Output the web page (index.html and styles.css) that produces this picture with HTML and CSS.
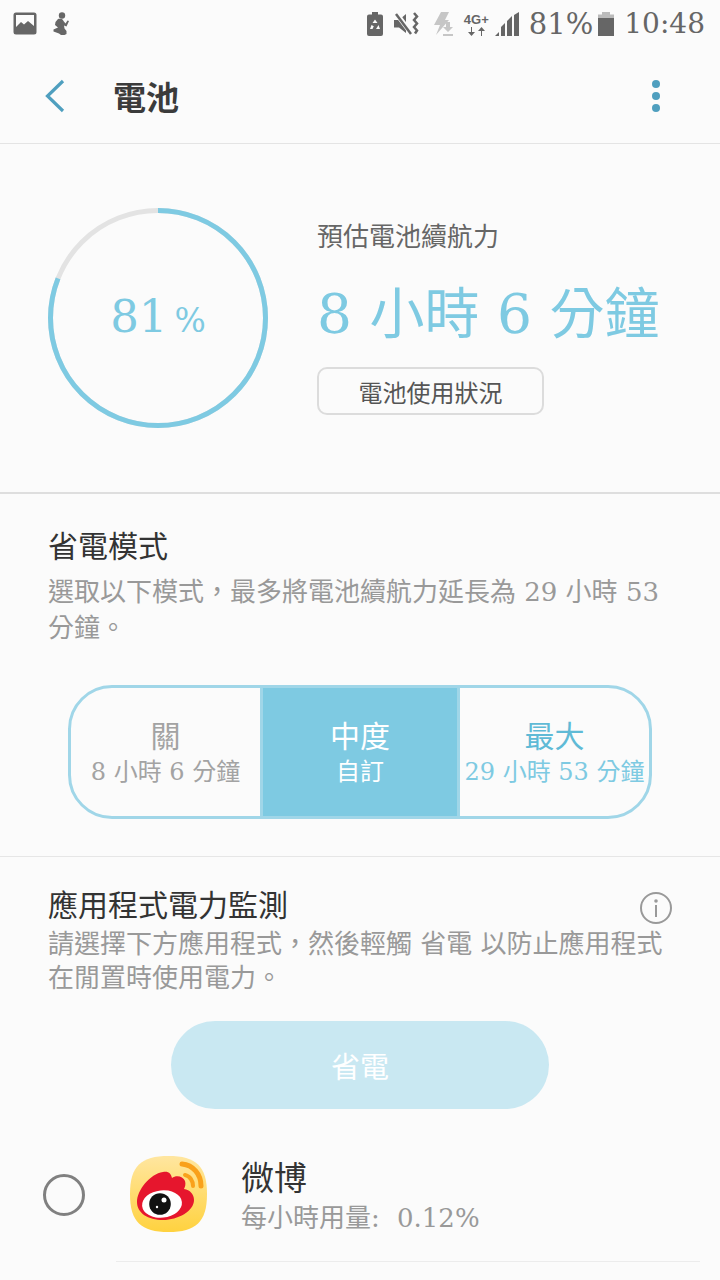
FILE: index.html
```html
<!DOCTYPE html>
<html lang="zh-Hant">

<head>
    <meta charset="UTF-8">
    <meta name="viewport" content="width=device-width, initial-scale=1.0">
    <title>電池</title>
    <link rel="stylesheet" href="styles.css">
</head>

<body>
    <div class="status-bar">
        <div class="status-left">
            <svg width="24" height="24" viewBox="0 0 24 24"><rect x="0.5" y="0.5" width="23" height="22" rx="2.5" fill="#666"/><rect x="3" y="3" width="18" height="13" fill="#fbfbfb"/><path d="M3 15l5-5 3 2.5 4-3.500 6 5v3H3z" fill="#666"/></svg>
            <svg width="19" height="24" viewBox="0 0 19 24"><circle cx="10" cy="3.500" r="3.200" fill="#666"/><path d="M6 7c2-.5 5-.3 5.500 2l2 2.500 2-3 1.500.5-2.500 5.500-2.500-1 .5 3 2 2.500v3l-2 1H9l-2-1.500-5.500-2v-2L6 15.500 3 13l.5-3z" fill="#666"/></svg>
        </div>
        <div class="status-right">
            <svg width="16" height="24" viewBox="0 0 16 24"><path d="M5 0h6v2.500h3a2 2 0 0 1 2 2V22a2 2 0 0 1-2 2H2a2 2 0 0 1-2-2V4.500a2 2 0 0 1 2-2h3z" fill="#666"/><path d="M8 7.500l2.500 3.500h-5zM4.500 13l2.300 1.300L5.500 17H3zM11.500 13l1.500 4H9l1-1.500z" fill="#fbfbfb"/></svg>
            <svg class="icon-mute" width="26" height="24" viewBox="0 0 26 24"><path d="M0 8h5l7-6V21l-7-5.500H0z" fill="#666"/><path d="M2 1l15 20" stroke="#fbfbfb" stroke-width="5"/><path d="M2 2l15 20" stroke="#666" stroke-width="2.500"/><path d="M20 1l3 3.500-3 3.500 3 3.500-3 3.500 3 3.500-2 3" fill="none" stroke="#666" stroke-width="2.500"/></svg>
            <svg class="icon-charge" width="21" height="24" viewBox="0 0 21 24"><path d="M8 0h8l-4 8h4L3 23l4-10H1z" fill="#c6c6c6"/><path d="M13 10h4v5h3l-5 5-5-5h3z" fill="#c6c6c6"/><rect x="10" y="22" width="10" height="2" fill="#c6c6c6"/></svg>
            <div class="status-net">
                <span class="net-label">4G+</span>
                <svg width="19" height="9" viewBox="0 0 19 9"><path d="M5 0v5h3L4.500 9 1 5h3V0zM14 9V4h-3l3.500-4L18 4h-3v5z" fill="#666"/></svg>
            </div>
            <svg class="icon-signal" width="25" height="24" viewBox="0 0 25 24"><path d="M0 24l4-4v4zM6 24v-9l4-4v13zM12 24V9l5-5v20zM19 24V3l5-3v24z" fill="#666"/></svg>
            <span class="status-text">81%</span>
            <svg class="icon-battery" width="16" height="24" viewBox="0 0 16 24"><rect x="4" y="0" width="8" height="3" fill="#bbb"/><rect x="0" y="2.500" width="16" height="3.500" fill="#bbb"/><rect x="0" y="6" width="16" height="18" fill="#666"/></svg>
            <span class="status-text status-time">10:48</span>
        </div>
    </div>

    <header class="app-bar">
        <svg class="back-icon" width="22" height="34" viewBox="0 0 22 34"><path d="M19 2L3.500 17 19 32" fill="none" stroke="#4f9fbf" stroke-width="3.200"/></svg>
        <h1 class="app-title">電池</h1>
        <div class="more-icon">
            <span></span>
            <span></span>
            <span></span>
        </div>
    </header>

    <section class="battery">
        <div class="ring">
            <svg width="220" height="220" viewBox="0 0 220 220">
                <circle cx="110" cy="110" r="107.500" fill="none" stroke="#e3e3e3" stroke-width="5"/>
                <circle cx="110" cy="110" r="107.500" fill="none" stroke="#7ecae2" stroke-width="5" pathLength="100" stroke-dasharray="81 100" transform="rotate(-90 110 110)"/>
            </svg>
            <div class="ring-label"><span class="ring-num">81</span><span class="ring-pct">%</span></div>
        </div>
        <div class="battery-info">
            <div class="battery-caption">預估電池續航力</div>
            <div class="battery-time">8 小時 6 分鐘</div>
            <button class="usage-btn">電池使用狀況</button>
        </div>
    </section>

    <section class="power-mode">
        <h2 class="section-title">省電模式</h2>
        <p class="section-desc">選取以下模式，最多將電池續航力延長為 29 小時 53 分鐘。</p>
        <div class="segments">
            <div class="segment">
                <div class="segment-name seg-grey">關</div>
                <div class="segment-sub seg-grey">8 小時 6 分鐘</div>
            </div>
            <div class="segment segment-active">
                <div class="segment-name">中度</div>
                <div class="segment-sub">自訂</div>
            </div>
            <div class="segment">
                <div class="segment-name seg-blue">最大</div>
                <div class="segment-sub seg-light">29 小時 53 分鐘</div>
            </div>
        </div>
    </section>

    <section class="monitor">
        <div class="monitor-head">
            <h2 class="section-title">應用程式電力監測</h2>
            <svg class="info-icon" width="32" height="32" viewBox="0 0 32 32"><circle cx="16" cy="16" r="15" fill="none" stroke="#999" stroke-width="2"/><circle cx="16" cy="9" r="1.800" fill="#999"/><rect x="15" y="13" width="2" height="12" fill="#999"/></svg>
        </div>
        <p class="section-desc monitor-desc">請選擇下方應用程式，然後輕觸 省電 以防止應用程式在閒置時使用電力。</p>
        <button class="save-btn">省電</button>
        <div class="app-row">
            <span class="radio"></span>
            <svg class="app-icon" width="77" height="76" viewBox="0 0 77 76">
                <defs>
                    <linearGradient id="weiboBg" x1="0" y1="0" x2="0" y2="1">
                        <stop offset="0" stop-color="#ffe6a0"/>
                        <stop offset="1" stop-color="#ffd23f"/>
                    </linearGradient>
                </defs>
                <path d="M38.500 0C66 0 77 10 77 38S66 76 38.500 76 0 66 0 38 11 0 38.500 0z" fill="url(#weiboBg)"/>
                <path d="M7 46C7 34 20 18 33 16c6-1 8 2 9 6 4-3 11-2 13 3 1 3 0 6-1 8 6 1 10 5 10 11 0 11-16 20-31 20C18 64 7 57 7 46z" fill="#e6162d"/>
                <ellipse cx="32" cy="48" rx="20" ry="13.700" fill="#fff" transform="rotate(-6 32 48)"/>
                <circle cx="30" cy="48" r="10.800" fill="#111"/>
                <circle cx="34" cy="44" r="2.500" fill="#fff"/>
                <circle cx="27" cy="51" r="1.200" fill="#fff"/>
                <path d="M52 8c11 1 19 10 19 22" fill="none" stroke="#f9a11b" stroke-width="5" stroke-linecap="round"/>
                <path d="M55 19c5 1 8 6 8 11" fill="none" stroke="#f9a11b" stroke-width="4" stroke-linecap="round"/>
            </svg>
            <div class="app-info">
                <div class="app-name">微博</div>
                <div class="app-usage">每小時用量: 0.12%</div>
            </div>
        </div>
    </section>
</body>

</html>
```

FILE: styles.css
```css
* {
    box-sizing: border-box;
}

html,
body {
    margin: 0;
    padding: 0;
}

body {
    width: 720px;
    height: 1280px;
    overflow: hidden;
    background-color: #fbfbfb;
    font-family: 'DejaVu Serif', 'Noto Sans CJK TC', serif;
    color: #333;
}

h1,
h2,
p {
    margin: 0;
    font-weight: normal;
}

/* status bar */
.status-bar {
    height: 48px;
    padding: 12px 15px 0 13px;
    display: flex;
    justify-content: space-between;
    align-items: flex-start;
}

.status-left {
    display: flex;
    gap: 15px;
}

.status-right {
    display: flex;
    align-items: center;
    height: 24px;
}

.status-right svg {
    flex: none;
}

.icon-mute {
    margin-left: 11px;
}

.icon-charge {
    margin-left: 13px;
}

.status-net {
    width: 25px;
    margin-left: 10px;
    display: flex;
    flex-direction: column;
    align-items: center;
    color: #666;
}

.net-label {
    font-family: 'Liberation Sans', sans-serif;
    font-size: 13px;
    font-weight: bold;
    line-height: 14px;
}

.icon-signal {
    margin-left: 6px;
}

.status-text {
    font-size: 29px;
    line-height: 24px;
    color: #666;
    margin-left: 9px;
    white-space: nowrap;
}

.icon-battery {
    margin-left: 5px;
}

.status-time {
    font-size: 28px;
    margin-left: 10px;
}

/* title row */
.app-bar {
    height: 96px;
    padding: 0 60px 0 44px;
    display: flex;
    align-items: center;
    border-bottom: 1px solid #e4e4e4;
}

.app-title {
    flex: 1;
    margin-left: 47px;
    font-size: 33px;
    font-weight: bold;
    color: #3b3b3b;
}

.more-icon {
    display: flex;
    flex-direction: column;
    gap: 4px;
}

.more-icon span {
    width: 8px;
    height: 8px;
    border-radius: 50%;
    background-color: #4f9fbf;
}

/* battery */
.battery {
    height: 350px;
    padding: 64px 0 0 48px;
    display: flex;
    border-bottom: 2px solid #dedede;
}

.ring {
    position: relative;
    width: 220px;
    height: 220px;
}

.ring-label {
    position: absolute;
    top: 0;
    left: 0;
    width: 100%;
    height: 100%;
    display: flex;
    align-items: baseline;
    justify-content: center;
    padding-top: 82px;
    color: #7ecae2;
}

.ring-num {
    font-size: 45px;
}

.ring-pct {
    font-size: 33px;
    margin-left: 7px;
}

.battery-info {
    margin-left: 49px;
    padding-top: 11px;
}

.battery-caption {
    font-size: 26px;
    line-height: 36px;
    color: #666;
}

.battery-time {
    margin-top: 24px;
    font-size: 55px;
    line-height: 70px;
    color: #7ecae2;
    white-space: nowrap;
}

.usage-btn {
    display: block;
    margin-top: 18px;
    width: 227px;
    height: 48px;
    padding: 0;
    background: none;
    border: 2px solid #dcdcdc;
    border-radius: 10px;
    font: inherit;
    font-size: 24px;
    color: #555;
}

/* power mode */
.power-mode {
    height: 363px;
    padding: 33px 48px 0;
    border-bottom: 1px solid #e6e6e6;
}

.section-title {
    font-size: 30px;
    line-height: 40px;
    color: #333;
}

.section-desc {
    margin-top: 7px;
    width: 616px;
    font-size: 26px;
    line-height: 36px;
    color: #999;
}

.segments {
    width: 584px;
    height: 134px;
    margin: 39px 0 0 20px;
    display: flex;
    border: 3px solid #a0d6e8;
    border-radius: 44px;
    overflow: hidden;
}

.segment {
    flex: 1;
    display: flex;
    flex-direction: column;
    align-items: center;
    padding-top: 30px;
    white-space: nowrap;
}

.segment-active {
    flex: none;
    width: 200px;
    background-color: #7ecae2;
    border-left: 3px solid #a0d6e8;
    border-right: 3px solid #a0d6e8;
    color: #fff;
}

.segment-name {
    font-size: 30px;
    line-height: 38px;
}

.segment-sub {
    font-size: 24px;
    line-height: 32px;
}

.seg-grey { color: #a3a3a3; }
.seg-blue { color: #5fbad6; }
.seg-light { color: #7ecae2; }

/* app monitor */
.monitor {
    position: relative;
    padding: 29px 48px 0;
}

.monitor-head {
    display: flex;
    justify-content: space-between;
    align-items: center;
    height: 40px;
}

.info-icon {
    flex: none;
    margin: 4px 0 0 0;
}

.monitor-desc {
    margin-top: 1px;
    line-height: 34px;
}

.save-btn {
    display: block;
    width: 378px;
    height: 88px;
    margin: 26px 0 0 123px;
    background-color: #c9e8f2;
    border: none;
    border-radius: 44px;
    font: inherit;
    font-size: 29px;
    color: #fff;
}

.app-row {
    display: flex;
    align-items: flex-start;
    margin: 47px 0 0 -5px;
}

.radio {
    flex: none;
    width: 42px;
    height: 42px;
    margin-top: 18px;
    border: 3px solid #808080;
    border-radius: 50%;
}

.app-icon {
    flex: none;
    margin-left: 45px;
}

.app-info {
    margin-left: 34px;
    padding-top: 3px;
}

.app-name {
    font-size: 33px;
    line-height: 40px;
    color: #333;
}

.app-usage {
    margin-top: 2px;
    font-size: 26px;
    line-height: 34px;
    color: #999;
    word-spacing: 9px;
}

.app-row::after {
    content: "";
    position: absolute;
    left: 116px;
    right: 20px;
    top: 404px;
    border-bottom: 1px solid #ececec;
}
```
